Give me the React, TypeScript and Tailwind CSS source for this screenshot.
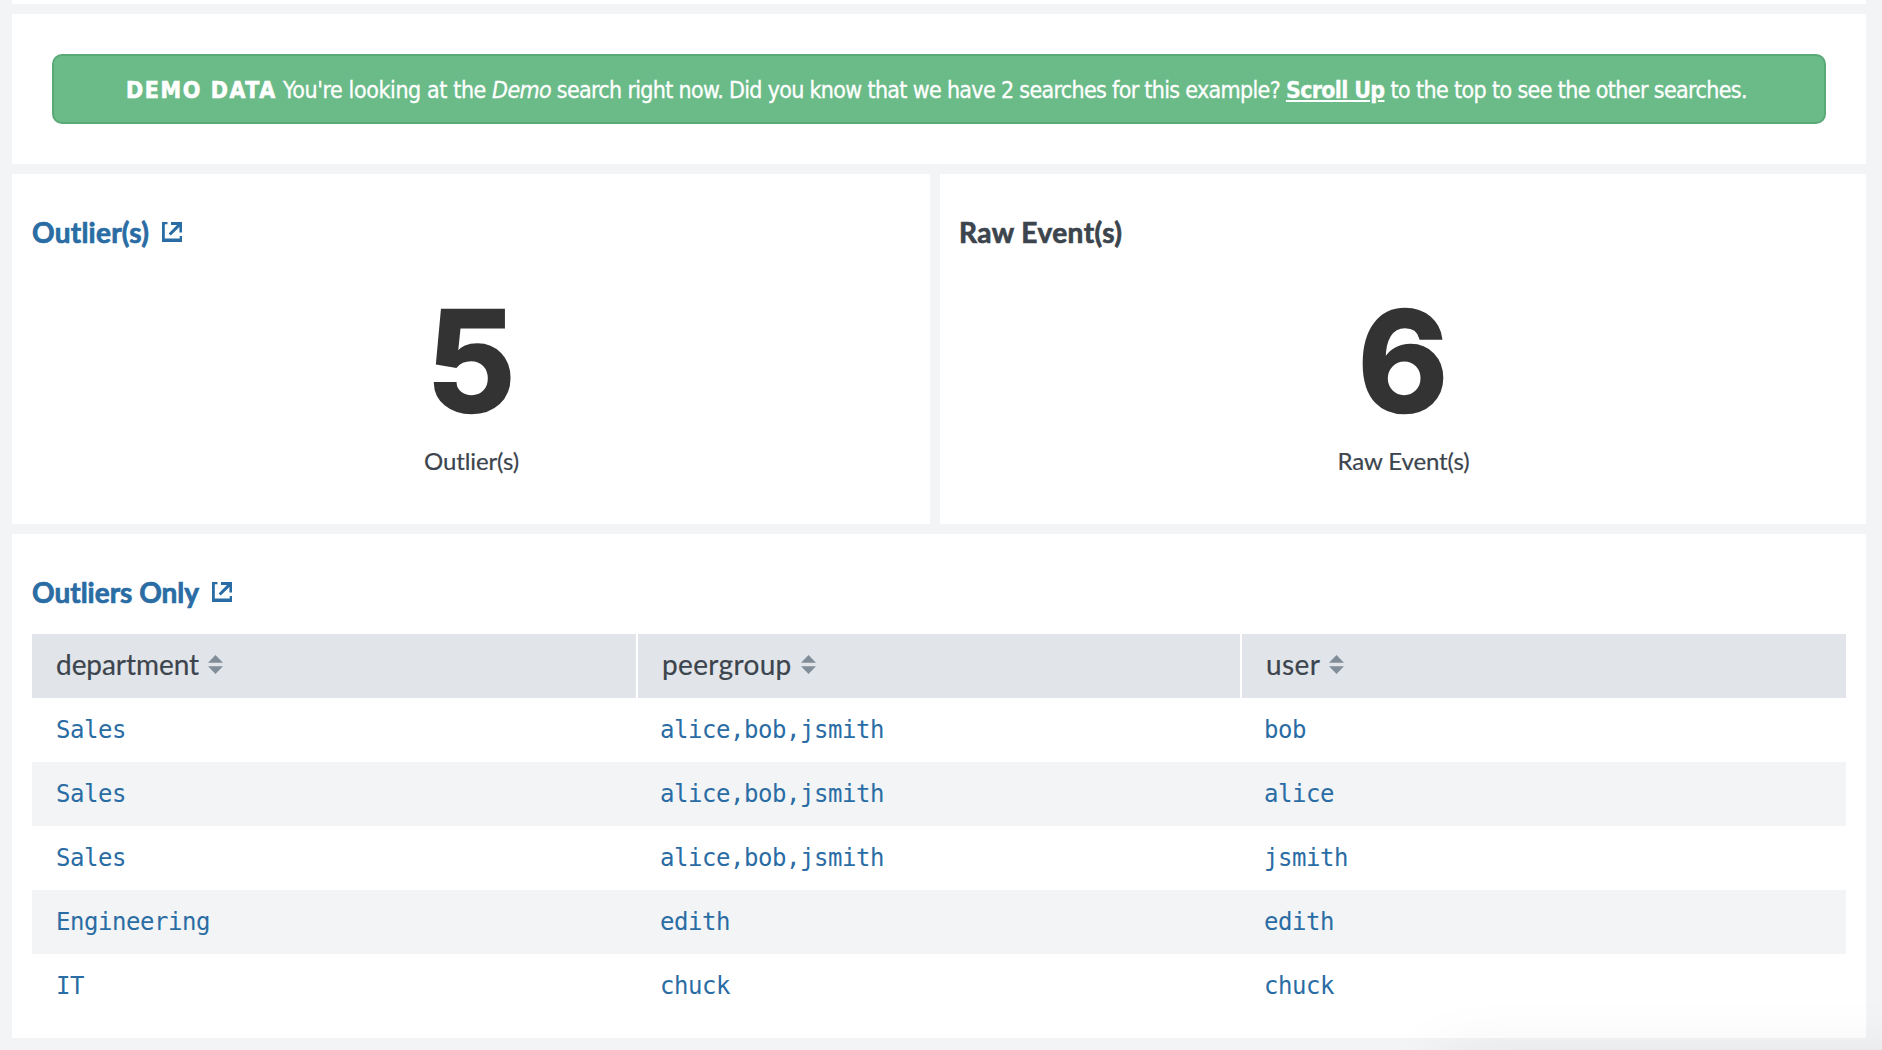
import type { ReactNode } from "react";

const ROWS = [
  ["Sales", "alice,bob,jsmith", "bob"],
  ["Sales", "alice,bob,jsmith", "alice"],
  ["Sales", "alice,bob,jsmith", "jsmith"],
  ["Engineering", "edith", "edith"],
  ["IT", "chuck", "chuck"],
];

function ExternalIcon() {
  return (
    <svg className="h-5 w-5 shrink-0" viewBox="0 0 20 20" fill="#2a6ca4">
      <path d="M0 0H5.5V2.2H2.8V16.5H17.7V14H20V20H0Z" />
      <path d="M9 0H20V10.5H17.4V5L8.8 13.6L6.6 11.4L15 3H9Z" />
    </svg>
  );
}

function SortIcon() {
  return (
    <svg className="relative -top-0.5 h-[19px] w-[15px] shrink-0" viewBox="0 0 15 19" fill="#818d99">
      <path d="M7.5 0L15 7.7H0Z" />
      <path d="M7.5 19L0 11.3H15Z" />
    </svg>
  );
}

function PanelTitle({ children, className }: { children: ReactNode; className: string }) {
  return (
    <h2 className={"flex h-8 items-center whitespace-nowrap text-[28px] leading-8 font-bold [-webkit-text-stroke:0.7px_currentColor] " + className}>
      {children}
    </h2>
  );
}

function Single({ value, label }: { value: string; label: string }) {
  return (
    <div className="flex flex-col items-center">
      <div className="mt-[43px] h-[134px] font-[Inter,sans-serif] text-[140px] leading-[140px] font-bold text-[#333333] [-webkit-text-stroke:2.5px_#333333]">
        {value}
      </div>
      <div className="mt-5 ml-px text-2xl leading-8 tracking-[-0.1px] text-[#3c444d] [-webkit-text-stroke:0.2px_currentColor]">{label}</div>
    </div>
  );
}

function HeaderCell({ label, className }: { label: string; className: string }) {
  return (
    <div className="flex h-16 items-center bg-[#e1e5e9] pl-6 text-[28px] leading-8 text-[#3c444d]">
      <span className={"relative -top-0.5 mr-[9px] [-webkit-text-stroke:0.2px_currentColor] " + className}>{label}</span>
      <SortIcon />
    </div>
  );
}

export default function App() {
  return (
    <div className="relative flex h-[1050px] w-[1882px] flex-col gap-2.5 overflow-hidden bg-[#f2f4f5] pr-4 pl-3 font-[Lato,sans-serif]">
      <div className="h-1 shrink-0 bg-white" />

      <section className="h-[150px] shrink-0 bg-white px-10 pt-10">
        <div className="flex h-[70px] items-center justify-center rounded-[10px] border-2 border-[#5aaa78] bg-[#6bbb89] pt-0.5 font-['DejaVu_Sans_Condensed','DejaVu_Sans',sans-serif] text-[23px] text-white">
          <p className="-ml-[5px] whitespace-pre tracking-[-0.67px] [-webkit-text-stroke:0.3px_currentColor]">
            <b className="tracking-[1.6px] [-webkit-text-stroke:0.6px_currentColor]">DEMO DATA</b>
            <span className="tracking-[-0.4px]"> You're looking at the </span>
            <i>Demo</i> search right now. Did you know that we have 2 searches for this example?{" "}
            <a className="font-bold underline">Scroll Up</a>
            <span className="tracking-[-0.62px]"> to the top to see the other searches.</span>
          </p>
        </div>
      </section>

      <div className="flex h-[350px] shrink-0 gap-2.5">
        <section className="w-[918px] bg-white px-5 pt-[42px]">
          <PanelTitle className="gap-[13px] text-[#2a6ca4]">
            <span className="tracking-[0.25px]">Outlier(s)</span>
            <ExternalIcon />
          </PanelTitle>
          <Single value="5" label="Outlier(s)" />
        </section>
        <section className="flex-1 bg-white px-[19px] pt-[42px]">
          <PanelTitle className="tracking-[0.45px] text-[#3c444d]">Raw Event(s)</PanelTitle>
          <Single value="6" label="Raw Event(s)" />
        </section>
      </div>

      <section className="h-[504px] shrink-0 bg-white px-5 pt-[42px]">
        <PanelTitle className="gap-[13px] text-[#2a6ca4]">
          <span>Outliers Only</span>
          <ExternalIcon />
        </PanelTitle>
        <div className="mt-[26px] grid grid-cols-[604px_602px_604px] gap-0.5">
          <HeaderCell label="department" className="tracking-[-0.05px]" />
          <HeaderCell label="peergroup" className="tracking-[0.35px]" />
          <HeaderCell label="user" className="tracking-[0.4px]" />
        </div>
        <div className="font-['DejaVu_Sans_Mono',monospace] text-2xl tracking-[-0.45px] text-[#2a6ca4]">
          {ROWS.map((row, i) => (
            <div key={i} className="grid h-16 grid-cols-[604px_604px_606px] items-center even:bg-[#f2f4f5]">
              {row.map((cell, j) => (
                <span key={j} className="pl-6">{cell}</span>
              ))}
            </div>
          ))}
        </div>
      </section>

      <div className="pointer-events-none absolute top-[1066px] left-[1440px] h-40 w-[600px] shadow-[0_0_70px_rgba(0,0,0,0.1)]" />
    </div>
  );
}
